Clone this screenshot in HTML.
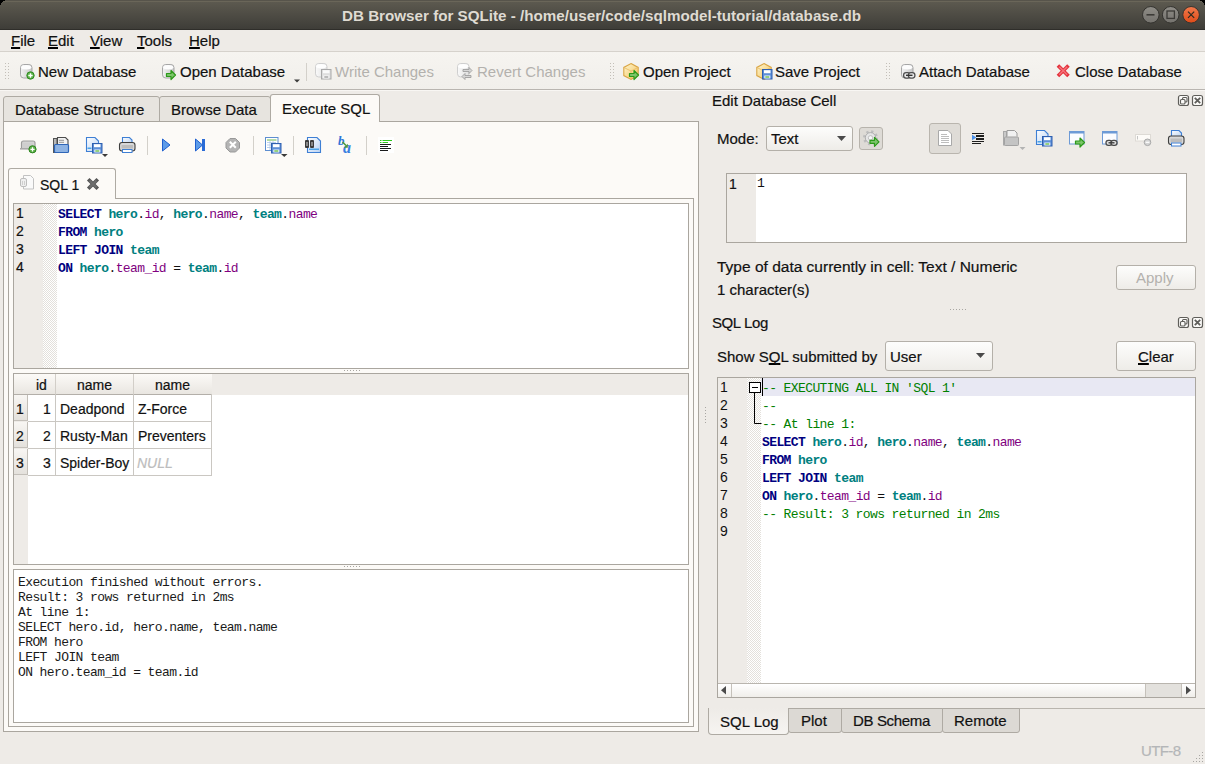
<!DOCTYPE html>
<html><head><meta charset="utf-8">
<style>
*{box-sizing:border-box;margin:0;padding:0}
html,body{width:1205px;height:764px;overflow:hidden;background:#eeebe7}
body{font-family:"Liberation Sans",sans-serif;font-size:15px;color:#111;position:relative}
.a{position:absolute}
.t{position:absolute;white-space:nowrap;line-height:1;-webkit-text-stroke:0.2px currentColor}
.mono{font-family:"Liberation Mono",monospace;font-size:13px;letter-spacing:-0.6px}
.win{position:absolute;left:0;top:0;width:1205px;height:764px;background:#eeebe7;overflow:hidden}
.title{position:absolute;left:0;top:0;width:1205px;height:30px;background:linear-gradient(#57544b 0,#57544b 1px,#6a6659 1px,#6a6659 2px,#5c594f 2px,#3e3d38 29px,#2f2e2a 29px);}
.corner{position:absolute;top:0;width:7px;height:7px;background:#000}
.menu{position:absolute;left:0;top:30px;width:1205px;height:22px;background:#eeebe7}
.tb{position:absolute;left:0;top:51px;width:1205px;height:39px;background:linear-gradient(#f6f4f0,#f1efeb);border-top:1px solid #d6d2cc;border-bottom:1px solid #b9b5b0;box-shadow:0 1px 0 #f8f6f3}
.dis{color:#b3b1ad;-webkit-text-stroke:0}
.hl{background:#c9c5be}
.grip{position:absolute;width:4px;height:16px;background-image:radial-gradient(circle,#bdb9b2 0.6px,transparent 0.8px);background-size:3px 3px}
.sep{position:absolute;width:1px;background:#d3d0ca}
.frame{position:absolute;border:1px solid #aaa69f}
.hatch{position:absolute;background-color:#fff;background-image:linear-gradient(45deg,#e3e0db 25%,transparent 25%,transparent 75%,#e3e0db 75%),linear-gradient(45deg,#e3e0db 25%,transparent 25%,transparent 75%,#e3e0db 75%);background-size:2px 2px;background-position:0 0,1px 1px}
.kw{color:#000080;font-weight:bold}
.id{color:#008080;font-weight:bold}
.fn{color:#800080}
.cm{color:#008000}
u{text-decoration:underline;text-decoration-thickness:2px;text-underline-offset:1px;text-decoration-skip-ink:none;text-decoration-color:#000}
.btn{position:absolute;border:1px solid #b4b0a9;border-radius:3px;background:linear-gradient(#fdfdfc,#eeece8)}
.tab{position:absolute;border:1px solid #aeaaa3;background:#e7e4df}
</style></head><body>
<div class="win">
  <!-- TITLE BAR -->
    <div class="title">
    <div class="t" style="left:342px;top:8px;font-weight:bold;color:#dfdbd2;font-size:15.2px;-webkit-text-stroke:0">DB Browser for SQLite - /home/user/code/sqlmodel-tutorial/database.db</div>
    <svg class="a" style="left:1140px;top:5px" width="62" height="21" viewBox="0 0 62 21">
      <defs>
        <linearGradient id="gg" x1="0" y1="0" x2="0" y2="1"><stop offset="0" stop-color="#8f8d87"/><stop offset="1" stop-color="#74726d"/></linearGradient>
        <linearGradient id="og" x1="0" y1="0" x2="0" y2="1"><stop offset="0" stop-color="#f27a4c"/><stop offset="1" stop-color="#de4b18"/></linearGradient>
      </defs>
      <circle cx="10.8" cy="9.8" r="8.3" fill="url(#gg)" stroke="#34332f" stroke-width="1"/>
      <rect x="6.5" y="9" width="8" height="1.6" fill="#3c3b37"/>
      <circle cx="30.7" cy="9.8" r="8.3" fill="url(#gg)" stroke="#34332f" stroke-width="1"/>
      <rect x="27" y="6" width="7.4" height="7.4" fill="none" stroke="#3c3b37" stroke-width="1.3"/>
      <circle cx="51.1" cy="9.8" r="8.3" fill="url(#og)" stroke="#34332f" stroke-width="1"/>
      <path d="M48 6.7l6.2 6.2M54.2 6.7l-6.2 6.2" stroke="#2a2a20" stroke-width="1.2"/>
    </svg>
  </div>

  <!-- MENU -->
  <div class="menu">
    <div class="t" style="left:11px;top:3px"><u>F</u>ile</div>
    <div class="t" style="left:48px;top:3px"><u>E</u>dit</div>
    <div class="t" style="left:90px;top:3px"><u>V</u>iew</div>
    <div class="t" style="left:137px;top:3px"><u>T</u>ools</div>
    <div class="t" style="left:189px;top:3px"><u>H</u>elp</div>
  </div>

  <!-- TOOLBAR -->
  <div class="tb">
        <div class="t" style="left:38px;top:12px">New Database</div>
    <div class="t" style="left:180px;top:12px">Open Database</div>
    <div class="sep" style="left:306px;top:11px;height:18px"></div>
    <div class="t dis" style="left:335px;top:12px">Write Changes</div>
    <div class="t dis" style="left:477px;top:12px">Revert Changes</div>
        <div class="t" style="left:643px;top:12px">Open Project</div>
    <div class="t" style="left:775px;top:12px">Save Project</div>
        <div class="t" style="left:919px;top:12px">Attach Database</div>
    <div class="t" style="left:1075px;top:12px">Close Database</div>
  </div>

  <!-- LEFT TABS -->
  <div class="tab" style="left:3px;top:96px;width:157px;height:26px;border-radius:3px 3px 0 0"></div>
  <div class="tab" style="left:159px;top:96px;width:112px;height:26px;border-radius:3px 3px 0 0"></div>
  <div class="t" style="left:15px;top:102px">Database Structure</div>
  <div class="t" style="left:171px;top:102px">Browse Data</div>
  <!-- pane -->
  <div class="frame" style="left:3px;top:121px;width:696px;height:611px;background:#fcfaf7"></div>
  <div class="a" style="left:270px;top:94px;width:110px;height:28px;border:1px solid #aeaaa3;border-bottom:none;border-radius:3px 3px 0 0;background:#fcfaf7"></div>
  <div class="t" style="left:282px;top:101px">Execute SQL</div>

  <!-- editor toolbar separators -->
  <div class="sep" style="left:147px;top:136px;height:19px"></div>
  <div class="sep" style="left:253px;top:136px;height:19px"></div>
  <div class="sep" style="left:293px;top:136px;height:19px"></div>
  <div class="sep" style="left:366px;top:136px;height:19px"></div>

  <!-- SQL 1 tab widget frame -->
  <div class="frame" style="left:8px;top:198px;width:686px;height:529px;background:#fcfaf7"></div>
  <div class="a" style="left:8px;top:168px;width:108px;height:31px;border:1px solid #aeaaa3;border-bottom:none;border-radius:3px 3px 0 0;background:#fcfaf7"></div>
  <div class="t" style="left:40px;top:178px;font-size:14px">SQL 1</div>

  <!-- editor -->
  <div class="frame" style="left:13px;top:203px;width:676px;height:166px;background:#fff"></div>
  <div class="a" style="left:14px;top:204px;width:29px;height:164px;background:#eeebe7"></div>
  <div class="hatch" style="left:43px;top:204px;width:14px;height:164px"></div>
  <div class="t" style="left:16px;top:206px;font-size:14px">1</div>
  <div class="t" style="left:16px;top:224px;font-size:14px">2</div>
  <div class="t" style="left:16px;top:242px;font-size:14px">3</div>
  <div class="t" style="left:16px;top:260px;font-size:14px">4</div>
  <div class="a mono" style="left:58px;top:206px;line-height:18px;white-space:pre"><span class="kw">SELECT</span> <span class="id">hero</span>.<span class="fn">id</span>, <span class="id">hero</span>.<span class="fn">name</span>, <span class="id">team</span>.<span class="fn">name</span>
<span class="kw">FROM</span> <span class="id">hero</span>
<span class="kw">LEFT</span> <span class="kw">JOIN</span> <span class="id">team</span>
<span class="kw">ON</span> <span class="id">hero</span>.<span class="fn">team_id</span> = <span class="id">team</span>.<span class="fn">id</span></div>

  <!-- results grid -->
  <div class="frame" style="left:13px;top:373px;width:676px;height:192px;background:#fff"></div>
  <div class="a" style="left:14px;top:374px;width:674px;height:21px;background:#eeebe7"></div>
  <div class="a" style="left:14px;top:374px;width:198px;height:21px;background:linear-gradient(#fcfaf7,#e9e6e1);border-bottom:1px solid #b3afa9"></div>
  <div class="a" style="left:14px;top:395px;width:14px;height:169px;background:#eeebe7"></div>
  <!-- header col separators -->
    <div class="a" style="left:55px;top:374px;width:1px;height:20px;background:#d2cec8"></div>
  <div class="a" style="left:133px;top:374px;width:1px;height:20px;background:#d2cec8"></div>
    <div class="t" style="left:36px;top:378px;font-size:14px">id</div>
  <div class="t" style="left:77px;top:378px;font-size:14px">name</div>
  <div class="t" style="left:155px;top:378px;font-size:14px">name</div>
  <!-- vertical header cells -->
  <div class="a" style="left:14px;top:395px;width:14px;height:26px;background:linear-gradient(#f8f6f3,#e4e1dc);border-right:1px solid #c2beb7;border-bottom:1px solid #c4c0ba"></div>
  <div class="a" style="left:14px;top:422px;width:14px;height:26px;background:linear-gradient(#f8f6f3,#e4e1dc);border-right:1px solid #c2beb7;border-bottom:1px solid #c4c0ba"></div>
  <div class="a" style="left:14px;top:449px;width:14px;height:26px;background:linear-gradient(#f8f6f3,#e4e1dc);border-right:1px solid #c2beb7;border-bottom:1px solid #c4c0ba"></div>
  <!-- grid lines -->
  <div class="a" style="left:28px;top:394px;width:184px;height:82px;border-right:1px solid #cac7c2;border-bottom:1px solid #cac7c2"></div>
  <div class="a" style="left:28px;top:421px;width:184px;height:1px;background:#cac7c2"></div>
  <div class="a" style="left:28px;top:448px;width:184px;height:1px;background:#cac7c2"></div>
  <div class="a" style="left:55px;top:394px;width:1px;height:82px;background:#cac7c2"></div>
  <div class="a" style="left:133px;top:394px;width:1px;height:82px;background:#cac7c2"></div>
  <div class="t" style="left:16px;top:402px;font-size:14px">1</div>
  <div class="t" style="left:16px;top:429px;font-size:14px">2</div>
  <div class="t" style="left:16px;top:456px;font-size:14px">3</div>
  <div class="t" style="left:43px;top:402px;font-size:14px">1</div>
  <div class="t" style="left:43px;top:429px;font-size:14px">2</div>
  <div class="t" style="left:43px;top:456px;font-size:14px">3</div>
  <div class="t" style="left:60px;top:402px;font-size:14px">Deadpond</div>
  <div class="t" style="left:60px;top:429px;font-size:14px">Rusty-Man</div>
  <div class="t" style="left:60px;top:456px;font-size:14px">Spider-Boy</div>
  <div class="t" style="left:138px;top:402px;font-size:14px">Z-Force</div>
  <div class="t" style="left:138px;top:429px;font-size:14px">Preventers</div>
  <div class="t" style="left:137px;top:456px;font-size:14px;font-style:italic;color:#bdbdbd">NULL</div>

  <!-- message box -->
  <div class="frame" style="left:13px;top:569px;width:676px;height:154px;background:#fff"></div>
  <div class="a mono" style="left:18px;top:575px;line-height:15px;white-space:pre;color:#1a1a1a">Execution finished without errors.
Result: 3 rows returned in 2ms
At line 1:
SELECT hero.id, hero.name, team.name
FROM hero
LEFT JOIN team
ON hero.team_id = team.id</div>

  <!-- RIGHT: Edit Database Cell -->
  <div class="t" style="left:712px;top:93px">Edit Database Cell</div>
  <svg class="a" style="left:1177px;top:94px" width="28" height="13" viewBox="0 0 28 13">
    <rect x="1.5" y="1.5" width="10" height="10" rx="2" fill="#fbfaf8" stroke="#5f5e5a" stroke-width="1.2"/>
    <rect x="5.5" y="3.5" width="4.5" height="4.5" rx="1" fill="none" stroke="#5f5e5a" stroke-width="1.1"/>
    <rect x="3.5" y="5.5" width="4.5" height="4.5" rx="1" fill="#fbfaf8" stroke="#5f5e5a" stroke-width="1.1"/>
    <rect x="15.5" y="1.5" width="10" height="10" rx="2" fill="#fbfaf8" stroke="#5f5e5a" stroke-width="1.2"/>
    <path d="M17.8 3.8l5.4 5.4M23.2 3.8l-5.4 5.4" stroke="#5f5e5a" stroke-width="1.8"/>
  </svg>
  <div class="t" style="left:717px;top:131px">Mode:</div>
  <div class="btn" style="left:766px;top:126px;width:87px;height:25px"></div>
  <div class="t" style="left:771px;top:131px">Text</div>
  <svg class="a" style="left:837px;top:136px" width="10" height="6"><path d="M0 0h9l-4.5 5z" fill="#4a4a4a"/></svg>
  <div class="a" style="left:859px;top:127px;width:24px;height:23px;border:1px solid #b7b3ac;border-radius:3px;background:#dedbd6"></div>

  <div class="a" style="left:929px;top:123px;width:32px;height:31px;border:1px solid #b9b5ae;border-radius:3px;background:#dfdcd7"></div>

  <div class="frame" style="left:726px;top:173px;width:461px;height:70px;background:#fff"></div>
  <div class="a" style="left:727px;top:174px;width:29px;height:68px;background:#eeebe7"></div>
  <div class="t" style="left:729px;top:177px;font-size:14px">1</div>
  <div class="a mono" style="left:757px;top:176px;line-height:15px">1</div>

  <div class="t" style="left:717px;top:259px;font-size:15.5px">Type of data currently in cell: Text / Numeric</div>
  <div class="t" style="left:717px;top:282px">1 character(s)</div>
  <div class="btn" style="left:1116px;top:265px;width:80px;height:25px"></div>
  <div class="t dis" style="left:1136px;top:270px">Apply</div>

  <!-- RIGHT: SQL Log -->
  <div class="t" style="left:712px;top:315px;letter-spacing:-0.4px">SQL Log</div>
  <svg class="a" style="left:1177px;top:316px" width="28" height="13" viewBox="0 0 28 13">
    <rect x="1.5" y="1.5" width="10" height="10" rx="2" fill="#fbfaf8" stroke="#5f5e5a" stroke-width="1.2"/>
    <rect x="5.5" y="3.5" width="4.5" height="4.5" rx="1" fill="none" stroke="#5f5e5a" stroke-width="1.1"/>
    <rect x="3.5" y="5.5" width="4.5" height="4.5" rx="1" fill="#fbfaf8" stroke="#5f5e5a" stroke-width="1.1"/>
    <rect x="15.5" y="1.5" width="10" height="10" rx="2" fill="#fbfaf8" stroke="#5f5e5a" stroke-width="1.2"/>
    <path d="M17.8 3.8l5.4 5.4M23.2 3.8l-5.4 5.4" stroke="#5f5e5a" stroke-width="1.8"/>
  </svg>
  <div class="t" style="left:717px;top:349px">Show S<u>Q</u>L submitted by</div>
  <div class="btn" style="left:885px;top:341px;width:108px;height:30px"></div>
  <div class="t" style="left:890px;top:349px">User</div>
  <svg class="a" style="left:976px;top:353px" width="10" height="6"><path d="M0 0h9l-4.5 5z" fill="#4a4a4a"/></svg>
  <div class="btn" style="left:1116px;top:341px;width:80px;height:30px"></div>
  <div class="t" style="left:1138px;top:349px"><u>C</u>lear</div>

  <div class="frame" style="left:717px;top:377px;width:479px;height:321px;background:#fff"></div>
  <div class="a" style="left:718px;top:378px;width:29px;height:305px;background:#eeebe7"></div>
  <div class="hatch" style="left:747px;top:378px;width:14px;height:305px"></div>
  <div class="a" style="left:761px;top:378px;width:434px;height:18px;background:#e8e8f3"></div>
  <div class="a" style="left:762px;top:378px;width:1px;height:18px;background:#000"></div>
  <div class="a" style="left:720px;top:378px;line-height:18px;white-space:pre;font-size:14px">1
2
3
4
5
6
7
8
9</div>
  <svg class="a" style="left:747px;top:378px" width="15" height="50">
    <rect x="2.5" y="4.5" width="11" height="10" fill="#fff" stroke="#000" stroke-width="1"/>
    <path d="M5 9.5h6" stroke="#000" stroke-width="1"/>
    <path d="M7.5 14.5v31h7" fill="none" stroke="#000" stroke-width="1"/>
  </svg>
  <div class="a mono" style="left:762px;top:380px;line-height:18px;white-space:pre"><span class="cm">-- EXECUTING ALL IN 'SQL 1'</span>
<span class="cm">--</span>
<span class="cm">-- At line 1:</span>
<span class="kw">SELECT</span> <span class="id">hero</span>.<span class="fn">id</span>, <span class="id">hero</span>.<span class="fn">name</span>, <span class="id">team</span>.<span class="fn">name</span>
<span class="kw">FROM</span> <span class="id">hero</span>
<span class="kw">LEFT</span> <span class="kw">JOIN</span> <span class="id">team</span>
<span class="kw">ON</span> <span class="id">hero</span>.<span class="fn">team_id</span> = <span class="id">team</span>.<span class="fn">id</span>
<span class="cm">-- Result: 3 rows returned in 2ms</span>
</div>
  <!-- h scrollbar -->
  <div class="a" style="left:718px;top:683px;width:477px;height:14px;border-top:1px solid #b9b5ae;background:linear-gradient(#ffffff,#f0eeea)"></div>
  <div class="a" style="left:731px;top:684px;width:1px;height:13px;background:#c5c1ba"></div>
  <div class="a" style="left:1145px;top:684px;width:37px;height:13px;background:#e3e1dd;border-left:1px solid #c5c1ba;border-right:1px solid #c5c1ba"></div>
  <svg class="a" style="left:721px;top:686px" width="6" height="9"><path d="M5 0v8.5L0 4.25z" fill="#4b4b4b"/></svg>
  <svg class="a" style="left:1186px;top:686px" width="6" height="9"><path d="M0 0v8.5L5 4.25z" fill="#4b4b4b"/></svg>

  <!-- bottom tabs -->
  <div class="a" style="left:788px;top:708px;width:417px;height:1px;background:#b9b5ae"></div>
  <div class="tab" style="left:788px;top:708px;width:54px;height:25px;background:#dcd9d4;border-radius:0 0 3px 3px"></div>
  <div class="tab" style="left:841px;top:708px;width:102px;height:25px;background:#dcd9d4;border-radius:0 0 3px 3px"></div>
  <div class="tab" style="left:942px;top:708px;width:78px;height:25px;background:#dcd9d4;border-radius:0 0 3px 3px"></div>
  <div class="a" style="left:708px;top:708px;width:81px;height:27px;border:1px solid #aeaaa3;border-top:none;border-radius:0 0 4px 4px;background:linear-gradient(#eeebe7,#f6f4f1)"></div>
  <div class="t" style="left:720px;top:714px">SQL Log</div>
  <div class="t" style="left:801px;top:713px">Plot</div>
  <div class="t" style="left:853px;top:713px;letter-spacing:-0.35px">DB Schema</div>
  <div class="t" style="left:954px;top:713px">Remote</div>

  <div class="t" style="left:1141px;top:743px;color:#b4b6b8;letter-spacing:-0.6px">UTF-8</div>

  <!-- ICON OVERLAY -->
  <svg class="a" style="left:0;top:0" width="1205" height="764" viewBox="0 0 1205 764">
    <defs>
      <linearGradient id="cyl" x1="0" y1="0" x2="1" y2="0"><stop offset="0" stop-color="#f4f4f4"/><stop offset=".5" stop-color="#dcdcdc"/><stop offset="1" stop-color="#c8c8c8"/></linearGradient>
      <linearGradient id="cyld" x1="0" y1="0" x2="1" y2="0"><stop offset="0" stop-color="#fafafa"/><stop offset=".5" stop-color="#ececec"/><stop offset="1" stop-color="#e0e0e0"/></linearGradient>
      <linearGradient id="gold" x1="0" y1="0" x2="1" y2="1"><stop offset="0" stop-color="#fff6d0"/><stop offset="1" stop-color="#f2c25a"/></linearGradient>
      <linearGradient id="blu" x1="0" y1="0" x2="0" y2="1"><stop offset="0" stop-color="#8db4ea"/><stop offset="1" stop-color="#3f74c8"/></linearGradient>
      <linearGradient id="doc" x1="0" y1="0" x2="1" y2="1"><stop offset="0" stop-color="#ffffff"/><stop offset="1" stop-color="#b9d2f3"/></linearGradient>
    </defs>
    <!-- grips -->
    <g fill="#c3bfb8">
      <rect x="5" y="63" width="1" height="1"/><rect x="8" y="63" width="1" height="1"/>
      <rect x="5" y="66" width="1" height="1"/><rect x="8" y="66" width="1" height="1"/>
      <rect x="5" y="69" width="1" height="1"/><rect x="8" y="69" width="1" height="1"/>
      <rect x="5" y="72" width="1" height="1"/><rect x="8" y="72" width="1" height="1"/>
      <rect x="5" y="75" width="1" height="1"/><rect x="8" y="75" width="1" height="1"/>
      <rect x="5" y="78" width="1" height="1"/><rect x="8" y="78" width="1" height="1"/>
      <rect x="610" y="63" width="1" height="1"/><rect x="613" y="63" width="1" height="1"/>
      <rect x="610" y="66" width="1" height="1"/><rect x="613" y="66" width="1" height="1"/>
      <rect x="610" y="69" width="1" height="1"/><rect x="613" y="69" width="1" height="1"/>
      <rect x="610" y="72" width="1" height="1"/><rect x="613" y="72" width="1" height="1"/>
      <rect x="610" y="75" width="1" height="1"/><rect x="613" y="75" width="1" height="1"/>
      <rect x="610" y="78" width="1" height="1"/><rect x="613" y="78" width="1" height="1"/>
      <rect x="886" y="63" width="1" height="1"/><rect x="889" y="63" width="1" height="1"/>
      <rect x="886" y="66" width="1" height="1"/><rect x="889" y="66" width="1" height="1"/>
      <rect x="886" y="69" width="1" height="1"/><rect x="889" y="69" width="1" height="1"/>
      <rect x="886" y="72" width="1" height="1"/><rect x="889" y="72" width="1" height="1"/>
      <rect x="886" y="75" width="1" height="1"/><rect x="889" y="75" width="1" height="1"/>
      <rect x="886" y="78" width="1" height="1"/><rect x="889" y="78" width="1" height="1"/>
    </g>
    <!-- window corners -->
    <g fill="#000">
      <rect x="0" y="0" width="5" height="1"/><rect x="0" y="1" width="3" height="1"/><rect x="0" y="2" width="2" height="1"/><rect x="0" y="3" width="1" height="2"/>
      <rect x="1200" y="0" width="5" height="1"/><rect x="1202" y="1" width="3" height="1"/><rect x="1203" y="2" width="2" height="1"/><rect x="1204" y="3" width="1" height="2"/>
    </g>
    <!-- splitter handles -->
    <g fill="#a8a6a2">
      <rect x="344" y="370" width="1" height="1"/><rect x="347" y="370" width="1" height="1"/><rect x="350" y="370" width="1" height="1"/><rect x="353" y="370" width="1" height="1"/><rect x="356" y="370" width="1" height="1"/><rect x="359" y="370" width="1" height="1"/>
      <rect x="344" y="566" width="1" height="1"/><rect x="347" y="566" width="1" height="1"/><rect x="350" y="566" width="1" height="1"/><rect x="353" y="566" width="1" height="1"/><rect x="356" y="566" width="1" height="1"/><rect x="359" y="566" width="1" height="1"/>
      <rect x="950" y="309" width="1" height="1"/><rect x="953" y="309" width="1" height="1"/><rect x="956" y="309" width="1" height="1"/><rect x="959" y="309" width="1" height="1"/><rect x="962" y="309" width="1" height="1"/><rect x="965" y="309" width="1" height="1"/>
      <rect x="705" y="407" width="1" height="1"/><rect x="705" y="410" width="1" height="1"/><rect x="705" y="413" width="1" height="1"/><rect x="705" y="416" width="1" height="1"/><rect x="705" y="419" width="1" height="1"/><rect x="705" y="422" width="1" height="1"/>
      <rect x="1202" y="752" width="1" height="1"/><rect x="1199" y="755" width="1" height="1"/><rect x="1202" y="755" width="1" height="1"/><rect x="1196" y="758" width="1" height="1"/><rect x="1199" y="758" width="1" height="1"/><rect x="1202" y="758" width="1" height="1"/><rect x="1193" y="761" width="1" height="1"/><rect x="1196" y="761" width="1" height="1"/><rect x="1199" y="761" width="1" height="1"/><rect x="1202" y="761" width="1" height="1"/>
    </g>
    <!-- New Database -->
    <g transform="translate(20 64)">
        <rect x="0.5" y="0.5" width="11.5" height="13.5" rx="3.2" fill="url(#cyl)" stroke="#a6a6a6"/>
        <ellipse cx="6.25" cy="3.2" rx="5" ry="2.2" fill="#fdfdfd"/>
      </g>
    <circle cx="30.5" cy="75.5" r="3.7" fill="#58b043" stroke="#2f8a22" stroke-width="1"/>
    <path d="M30.5 73.3v4.4M28.3 75.5h4.4" stroke="#fff" stroke-width="1.4"/>
    <!-- Open Database -->
    <g transform="translate(162 64)">
        <rect x="0.5" y="0.5" width="11.5" height="13.5" rx="3.2" fill="url(#cyl)" stroke="#a6a6a6"/>
        <ellipse cx="6.25" cy="3.2" rx="5" ry="2.2" fill="#fdfdfd"/>
      </g>
    <g transform="translate(166 70)"><path d="M0.5 3.5h4.5v-3l4.5 4.5l-4.5 4.5v-3h-4.5z" fill="#7cc46a" stroke="#2d9a1a" stroke-width="1.2" stroke-linejoin="round"/></g>
    <path d="M294 79.5h6l-3 3z" fill="#3c3c3c"/>
    <!-- Write Changes -->
    <g transform="translate(315 63)">
        <rect x="0.5" y="0.5" width="11.5" height="13.5" rx="3.2" fill="url(#cyld)" stroke="#cfcfcf"/>
        <ellipse cx="6.25" cy="3.2" rx="5" ry="2.2" fill="#fefefe"/>
      </g>
    <g transform="translate(321 69)">
        <rect x="0.5" y="0.5" width="9.5" height="9.5" fill="#dedede" stroke="#a9a9a9"/>
        <rect x="2" y="1.2" width="6.5" height="3" fill="#fafafa"/>
        <rect x="2.3" y="6.5" width="6" height="3" fill="#fafafa"/>
        <rect x="3.3" y="7.3" width="4" height="1.4" fill="#a0a0a0"/>
      </g>
    <!-- Revert Changes -->
    <g transform="translate(457 63)">
        <rect x="0.5" y="0.5" width="11.5" height="13.5" rx="3.2" fill="url(#cyld)" stroke="#cfcfcf"/>
        <ellipse cx="6.25" cy="3.2" rx="5" ry="2.2" fill="#fefefe"/>
      </g>
    <path d="M463 69.5h6v-2l3 3l-3 3v-2h-6z M471 75.5h-6v-2l-3 3l3 3v-2h6z" fill="#d6d6d6" stroke="#9f9f9f" stroke-width=".9"/>
    <!-- Open Project -->
    <g transform="translate(623 63)">
        <path d="M8 0.6l7.2 3.8v8.2l-7.2 3.8l-7.2-3.8v-8.2z" fill="url(#gold)" stroke="#d9a544" stroke-width="1.1"/>
        <path d="M1 4.5l7 3.6l7-3.6M8 8.1v7.6" fill="none" stroke="#e7b860" stroke-width=".8"/>
      </g>
    <g transform="translate(629 70)"><path d="M0.5 3.5h4.5v-3l4.5 4.5l-4.5 4.5v-3h-4.5z" fill="#7cc46a" stroke="#2d9a1a" stroke-width="1.2" stroke-linejoin="round"/></g>
    <!-- Save Project -->
    <g transform="translate(756 63)">
        <path d="M8 0.6l7.2 3.8v8.2l-7.2 3.8l-7.2-3.8v-8.2z" fill="url(#gold)" stroke="#d9a544" stroke-width="1.1"/>
        <path d="M1 4.5l7 3.6l7-3.6M8 8.1v7.6" fill="none" stroke="#e7b860" stroke-width=".8"/>
      </g>
    <g transform="translate(762 69)">
        <rect x="0.5" y="0.5" width="9.5" height="9.5" fill="#5d8fd8" stroke="#2e5fb0"/>
        <rect x="2" y="1.2" width="6.5" height="3" fill="#fff"/>
        <rect x="2.3" y="6.5" width="6" height="3" fill="#eef5ff"/>
        <rect x="3.3" y="7.3" width="4" height="1.4" fill="#6fc04a"/>
      </g>
    <!-- Attach Database -->
    <g transform="translate(901 64)">
        <rect x="0.5" y="0.5" width="11.5" height="13.5" rx="3.2" fill="url(#cyl)" stroke="#a6a6a6"/>
        <ellipse cx="6.25" cy="3.2" rx="5" ry="2.2" fill="#fdfdfd"/>
      </g>
    <rect x="903.6" y="72.6" width="6.5" height="5.5" rx="2.5" fill="#e8e8e8" stroke="#4f4f4f" stroke-width="1.3"/>
    <rect x="908.4" y="72.6" width="6.5" height="5.5" rx="2.5" fill="#e8e8e8" stroke="#4f4f4f" stroke-width="1.3"/>
    <path d="M906 75.3h6.5" stroke="#333" stroke-width="1.4"/>
    <!-- Close Database -->
    <path d="M1059.2 66.8l8 8M1067.2 66.8l-8 8" stroke="#e4323c" stroke-width="3.6" stroke-linecap="square"/><path d="M1059.2 66.8l8 8M1067.2 66.8l-8 8" stroke="#f5737a" stroke-width="1.4"/>

    <!-- ===== editor toolbar ===== -->
    <!-- open tab -->
    <path d="M21.5 148.5v-5.5a2 2 0 0 1 2-2h9.5a2 2 0 0 1 2 2v5.5" fill="#d4d4d4" stroke="#9d9d9d" stroke-width="1.2"/>
    <rect x="23" y="143" width="10" height="5" fill="#cfcfcf"/>
    <rect x="20" y="148" width="12" height="1.6" fill="#a9a9a9"/>
    <circle cx="32.5" cy="149.3" r="3.6" fill="#5cb048" stroke="#2e8520" stroke-width="1"/>
    <path d="M32.5 147.2v4.2M30.4 149.3h4.2" stroke="#fff" stroke-width="1.3"/>
    <!-- open file -->
    <rect x="53.5" y="138.5" width="3.5" height="14" fill="#b8b8b8" stroke="#555" stroke-width="1"/>
    <path d="M57.5 145v-7.5h8l2.5 2.5v5" fill="#f2f2f2" stroke="#4c4c4c" stroke-width="1.1"/>
    <path d="M59 140.3h5M59 142.3h5" stroke="#8a8a8a" stroke-width="0.9"/>
    <rect x="54.5" y="144.5" width="14" height="8" rx="1" fill="#8eb3e3" stroke="#2f66b8" stroke-width="1.2"/>
    <!-- save sql -->
    <path d="M86.5 137.5h8.5l3.5 3.5v10.5h-12z" fill="url(#doc)" stroke="#3e7fd4" stroke-width="1.1"/>
    <rect x="87.5" y="147.5" width="4" height="1.5" fill="#4aa3e8"/>
    <g transform="translate(92 143)">
        <rect x="0.5" y="0.5" width="9.5" height="9.5" fill="#5d8fd8" stroke="#2e5fb0"/>
        <rect x="2" y="1.2" width="6.5" height="3" fill="#fff"/>
        <rect x="2.3" y="6.5" width="6" height="3" fill="#eef5ff"/>
        <rect x="3.3" y="7.3" width="4" height="1.4" fill="#6fc04a"/>
      </g>
    <path d="M102 154h6l-3 3z" fill="#3a3a3a"/>
    <!-- print -->
    <path d="M122.5 144v-6.5h7l2.5 2.5v4" fill="url(#doc)" stroke="#3e7fd4" stroke-width="1.1"/>
    <rect x="119.5" y="142.5" width="15.5" height="8.5" rx="2.5" fill="#d8d8d8" stroke="#3e3e3e" stroke-width="1.1"/>
    <rect x="121.5" y="145" width="11.5" height="3.5" fill="#bdbdbd"/>
    <rect x="122.5" y="149.5" width="9.5" height="3" fill="#fff" stroke="#3e7fd4" stroke-width="1"/>
    <!-- execute -->
    <path d="M162.5 139v12l7.5-6z" fill="#5d9be8" stroke="#1f5fcf" stroke-width="1"/>
    <path d="M195.5 139v12l7-6z" fill="#5d9be8" stroke="#1f5fcf" stroke-width="1"/>
    <rect x="202" y="139" width="3" height="12" fill="#2a6bd6"/>
    <!-- stop -->
    <path d="M230 138.5h5.5l4 4v5.5l-4 4h-5.5l-4-4v-5.5z" fill="#b4b4b4" stroke="#999" stroke-width="1"/>
    <path d="M229.8 141.8l6 6M235.8 141.8l-6 6" stroke="#fff" stroke-width="2"/>
    <!-- export table -->
    <rect x="265.5" y="137.5" width="12.5" height="13" fill="#fff" stroke="#5d8ed0" stroke-width="1"/>
    <path d="M267 140h9.5" stroke="#69b84f" stroke-width="1"/>
    <path d="M267 142.5h9M267 145h9M267 147.5h9M270 141v9M273 141v9" stroke="#a8c4e8" stroke-width=".8"/>
    <g transform="translate(271 143)">
        <rect x="0.5" y="0.5" width="9.5" height="9.5" fill="#5d8fd8" stroke="#2e5fb0"/>
        <rect x="2" y="1.2" width="6.5" height="3" fill="#fff"/>
        <rect x="2.3" y="6.5" width="6" height="3" fill="#eef5ff"/>
        <rect x="3.3" y="7.3" width="4" height="1.4" fill="#6fc04a"/>
      </g>
    <path d="M281 154h6.5l-3.25 3z" fill="#3a3a3a"/>
    <!-- find -->
    <path d="M307.5 137.5h9.5l3.5 3.5v11.5h-13z" fill="url(#doc)" stroke="#3e7fd4" stroke-width="1.1"/>
    <rect x="309" y="148.5" width="10" height="1.5" fill="#4aa3e8"/>
    <rect x="305" y="140" width="4" height="8" rx="1" fill="#3c3c3c"/>
    <rect x="310" y="140" width="4" height="8" rx="1" fill="#3c3c3c"/>
    <rect x="306" y="142" width="2" height="4" fill="#888"/><rect x="311" y="142" width="2" height="4" fill="#888"/>
    <!-- replace -->
    <text x="338" y="145" font-family="Liberation Serif" font-style="italic" font-weight="bold" font-size="13" fill="#2f76d8">b</text>
    <text x="343" y="153" font-family="Liberation Serif" font-style="italic" font-weight="bold" font-size="16" fill="#3a7fe0">a</text>
    <path d="M342.5 142l3.5 3.5" stroke="#4f9a3c" stroke-width="1.6"/>
    <path d="M343.8 147.8h4v-4z" fill="#4f9a3c"/>
    <!-- format -->
    <rect x="378" y="137" width="16" height="16" fill="#fff"/>
    <path d="M380 140.5h1.5M382.5 140.5h9.5M380 142.5h1.5M382.5 142.5h5.5" stroke="#2fc61c" stroke-width="1"/>
    <path d="M380 144.5h11M380 146.5h8M380 148.5h11M380 150.5h8" stroke="#1a1a1a" stroke-width="1"/>
    <!-- SQL1 tab icon -->
    <path d="M23.5 175.5h7l3 3v10.5h-10z" fill="#fafafa" stroke="#c2c2c2" stroke-width="1"/>
    <rect x="20.5" y="178.5" width="6" height="8" rx="1.5" fill="#efefef" stroke="#bdbdbd" stroke-width="1"/>
    <path d="M22.5 181v4M24.5 181v4" stroke="#cfcfcf" stroke-width="1"/>
    <!-- ===== edit cell toolbar ===== -->
    <!-- gear -->
    <g transform="translate(870.5 137.8)">
      <circle r="6" fill="none" stroke="#bdbdbd" stroke-width="3" stroke-dasharray="2.1 2.6"/>
      <circle r="5.2" fill="#e6e6e6" stroke="#a9a9a9" stroke-width="0.9"/>
      <circle r="2.2" fill="#f7f7f7" stroke="#b4b4b4" stroke-width="0.8"/>
    </g>
    <g transform="translate(869.5 136.8)"><path d="M0.5 3.5h4.5v-3l4.5 4.5l-4.5 4.5v-3h-4.5z" fill="#7cc46a" stroke="#2d9a1a" stroke-width="1.2" stroke-linejoin="round"/></g>
    <!-- doc in pressed button -->
    <path d="M938.5 130.5h9.5l3.5 3.5v11.5h-13z" fill="#fff" stroke="#a9a9a9" stroke-width="1"/>
    <path d="M941 134.5h6M941 136.5h8M941 138.5h8M941 140.5h8M941 142.5h8" stroke="#b5b5b5" stroke-width=".9"/>
    <!-- indent -->
    <path d="M972 133.5h12M972 141.5h12M972 143.5h9" stroke="#1e1e1e" stroke-width="1"/>
    <path d="M976 136h8M976 139h8" stroke="#1e1e1e" stroke-width="2"/>
    <path d="M972 134.8l4.5 2.7l-4.5 2.7z" fill="#4c92ea"/>
    <!-- disabled folder -->
    <rect x="1003.5" y="131.5" width="3" height="13.5" fill="#c9c9c9" stroke="#a8a8a8" stroke-width="1"/>
    <path d="M1007 136.5v-6h7.5l2.5 2.5v3.5" fill="#f1f1f1" stroke="#9c9c9c" stroke-width="1"/>
    <rect x="1004.5" y="137" width="14" height="8.5" rx="1" fill="#c4c4c4" stroke="#a3a3a3" stroke-width="1"/>
    <path d="M1019.5 147h6l-3 3z" fill="#b3b3b3"/>
    <!-- save doc -->
    <path d="M1036.5 130.5h8l3.5 3.5v10.5h-11.5z" fill="url(#doc)" stroke="#3e7fd4" stroke-width="1.1"/>
    <rect x="1037.5" y="141" width="4" height="1.5" fill="#4aa3e8"/>
    <g transform="translate(1042 136)">
        <rect x="0.5" y="0.5" width="9.5" height="9.5" fill="#5d8fd8" stroke="#2e5fb0"/>
        <rect x="2" y="1.2" width="6.5" height="3" fill="#fff"/>
        <rect x="2.3" y="6.5" width="6" height="3" fill="#eef5ff"/>
        <rect x="3.3" y="7.3" width="4" height="1.4" fill="#6fc04a"/>
      </g>
    <!-- window export -->
    <rect x="1069.5" y="131.5" width="14.5" height="12.5" fill="#fbfcff" stroke="#6d9ad6" stroke-width="1"/>
    <rect x="1069.5" y="131.5" width="14.5" height="2" fill="#6d9ad6"/>
    <g transform="translate(1075 137.5)"><path d="M0.5 3.5h4.5v-3l4.5 4.5l-4.5 4.5v-3h-4.5z" fill="#7cc46a" stroke="#2d9a1a" stroke-width="1.2" stroke-linejoin="round"/></g>
    <!-- window link -->
    <rect x="1102.5" y="131.5" width="14.5" height="12.5" fill="#fbfcff" stroke="#6d9ad6" stroke-width="1"/>
    <rect x="1102.5" y="131.5" width="14.5" height="2" fill="#6d9ad6"/>
    <rect x="1106" y="140.3" width="6" height="5" rx="2.3" fill="#e0e0e0" stroke="#4a4a4a" stroke-width="1.3"/>
    <rect x="1111" y="140.3" width="6" height="5" rx="2.3" fill="#e0e0e0" stroke="#4a4a4a" stroke-width="1.3"/>
    <path d="M1108.5 142.8h6" stroke="#333" stroke-width="1.3"/>
    <!-- null -->
    <rect x="1135.5" y="134.5" width="15" height="6.5" fill="#fdfbf8" stroke="#dddad5" stroke-width="1"/>
    <path d="M1137.5 136v3.5" stroke="#c4c4c4" stroke-width="1"/>
    <circle cx="1147.5" cy="142.3" r="3.3" fill="#d4d4d4" stroke="#a9a9a9" stroke-width="1"/>
    <path d="M1145.6 142.3h3.8" stroke="#fff" stroke-width="1.2"/>
    <!-- print -->
    <path d="M1171.5 137v-6.5h7.5l2.5 2.5v4" fill="url(#doc)" stroke="#3e7fd4" stroke-width="1.1"/>
    <rect x="1168.5" y="136" width="15.5" height="8.5" rx="2.5" fill="#d8d8d8" stroke="#3e3e3e" stroke-width="1.1"/>
    <rect x="1170.5" y="138.5" width="11.5" height="3.5" fill="#bdbdbd"/>
    <rect x="1171.5" y="143" width="9.5" height="3" fill="#fff" stroke="#3e7fd4" stroke-width="1"/>
    <!-- SQL1 close -->
    <path d="M89.5 180.5l7 7M96.5 180.5l-7 7" stroke="#555" stroke-width="3.6" stroke-linecap="square"/><path d="M89.5 180.5l7 7M96.5 180.5l-7 7" stroke="#6e6e6e" stroke-width="1.8"/>
  </svg>
</div>
</body></html>
